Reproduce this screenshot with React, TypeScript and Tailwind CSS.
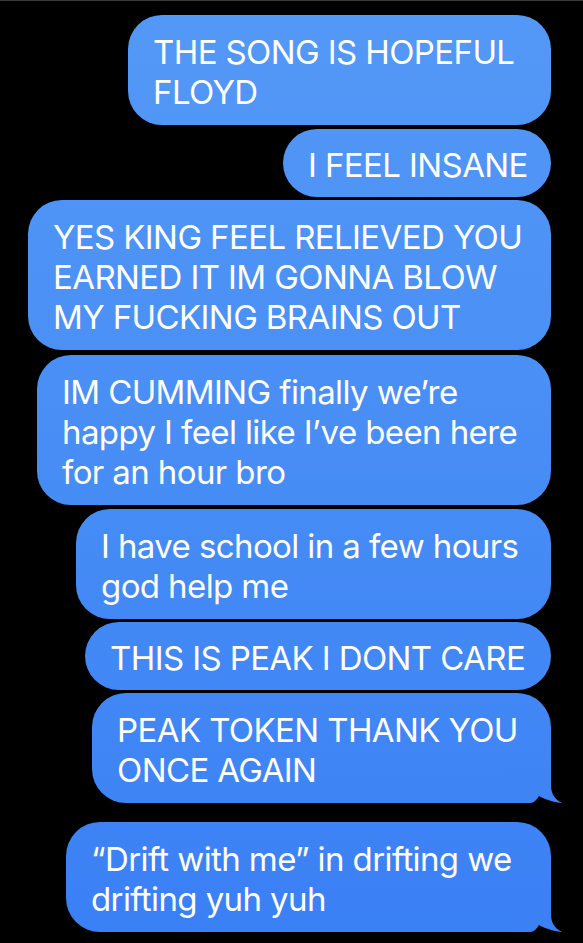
import React from "react";

type Msg = { lines: string[]; w: number; mt: number; tail?: string };

const msgs: Msg[] = [
  { lines: ["THE SONG IS HOPEFUL", "FLOYD"], w: 423, mt: 0 },
  { lines: ["I FEEL INSANE"], w: 268, mt: 4 },
  { lines: ["YES KING FEEL RELIEVED YOU", "EARNED IT IM GONNA BLOW", "MY FUCKING BRAINS OUT"], w: 523, mt: 3 },
  { lines: ["IM CUMMING finally we\u2019re", "happy I feel like I\u2019ve been here", "for an hour bro"], w: 514, mt: 5 },
  { lines: ["I have school in a few hours", "god help me"], w: 475, mt: 4 },
  { lines: ["THIS IS PEAK I DONT CARE"], w: 466, mt: 3 },
  { lines: ["PEAK TOKEN THANK YOU", "ONCE AGAIN"], w: 459, mt: 3, tail: "#3e84f5" },
  { lines: ["\u201CDrift with me\u201D in drifting we", "drifting yuh yuh"], w: 485, mt: 19, tail: "#3b81f5" },
];

function Tail({ color }: { color: string }) {
  return (
    <svg
      className="absolute bottom-0 right-[-12px]"
      width="52"
      height="34"
      viewBox="0 0 52 34"
    >
      <path
        d="M40 0 L40 16 C40 25 44 31 51.5 34 C44 33.6 35 31 28 27 C26 30 24 33 20 34 L0 34 L0 0 Z"
        fill={color}
      />
    </svg>
  );
}

function Bubble({ m }: { m: Msg }) {
  const single = m.lines.length === 1;
  return (
    <div
      className={`relative rounded-[34px] bg-fixed bg-linear-to-b from-[#5499f6] to-[#3a80f5] pl-[25px] text-white text-[33px] leading-[40px] tracking-[-0.6px] ${
        single ? "pt-[16px] pb-[12px]" : "pt-[17px] pb-[13px]"
      }`}
      style={{ width: m.w, marginTop: m.mt }}
    >
      {m.tail && <Tail color={m.tail} />}
      {m.lines.map((l, i) => (
        <span key={i} className="relative block whitespace-nowrap">
          {l}
        </span>
      ))}
    </div>
  );
}

export default function App() {
  return (
    <div
      className="w-[583px] h-[943px] bg-black overflow-hidden"
      style={{ fontFamily: "Inter, 'Liberation Sans', sans-serif" }}
    >
      <div className="h-px bg-[#3a3a3c]" />
      <div className="flex flex-col items-end pr-[32px] pt-[14px]">
        {msgs.map((m, i) => (
          <Bubble key={i} m={m} />
        ))}
      </div>
    </div>
  );
}
